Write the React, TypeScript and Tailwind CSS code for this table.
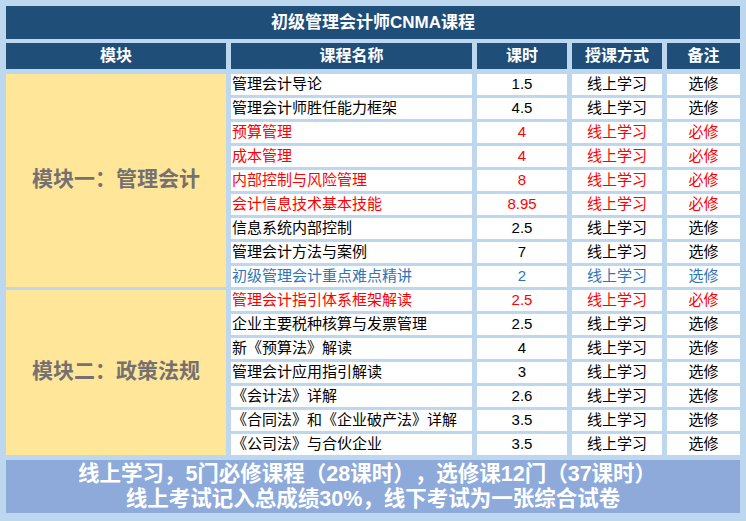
import React from 'react'

type Row = {
  name: string
  hours: string
  required: boolean
  tone: 'black' | 'red' | 'blue'
}

// 模块一
const moduleOne: Row[] = [
  { name: '管理会计导论', hours: '1.5', required: false, tone: 'black' },
  { name: '管理会计师胜任能力框架', hours: '4.5', required: false, tone: 'black' },
  { name: '预算管理', hours: '4', required: true, tone: 'red' },
  { name: '成本管理', hours: '4', required: true, tone: 'red' },
  { name: '内部控制与风险管理', hours: '8', required: true, tone: 'red' },
  { name: '会计信息技术基本技能', hours: '8.95', required: true, tone: 'red' },
  { name: '信息系统内部控制', hours: '2.5', required: false, tone: 'black' },
  { name: '管理会计方法与案例', hours: '7', required: false, tone: 'black' },
  { name: '初级管理会计重点难点精讲', hours: '2', required: false, tone: 'blue' },
]

// 模块二
const moduleTwo: Row[] = [
  { name: '管理会计指引体系框架解读', hours: '2.5', required: true, tone: 'red' },
  { name: '企业主要税种核算与发票管理', hours: '2.5', required: false, tone: 'black' },
  { name: '新《预算法》解读', hours: '4', required: false, tone: 'black' },
  { name: '管理会计应用指引解读', hours: '3', required: false, tone: 'black' },
  { name: '《会计法》详解', hours: '2.6', required: false, tone: 'black' },
  { name: '《合同法》和《企业破产法》详解', hours: '3.5', required: false, tone: 'black' },
  { name: '《公司法》与合伙企业', hours: '3.5', required: false, tone: 'black' },
]

const toneClass = {
  black: 'text-black',
  red: 'text-[#ff0000]',
  blue: 'text-[#2e75b6]',
}

const headers = ['模块', '课程名称', '课时', '授课方式', '备注']

function CourseCells({ row }: { row: Row }) {
  const c = toneClass[row.tone]
  return (
    <>
      <div className={`bg-white flex items-center pl-[1px] whitespace-nowrap ${c}`}>{row.name}</div>
      <div className={`bg-white flex items-center justify-center ${c}`}>{row.hours}</div>
      <div className={`bg-white flex items-center justify-center ${c}`}>线上学习</div>
      <div className={`bg-white flex items-center justify-center ${c}`}>
        {row.required ? '必修' : '选修'}
      </div>
    </>
  )
}

export default function App() {
  return (
    <div
      className="w-[746px] h-[521px] bg-[#bdd7ee] pt-[6px] px-[6px] flex flex-col [text-spacing-trim:space-all]"
      style={{ fontFamily: '"Liberation Sans", "Noto Sans CJK SC", sans-serif' }}
    >
      {/* 标题 */}
      <div className="h-[33px] bg-[#1f4e79] text-white font-bold text-[17px] flex items-center justify-center">
        初级管理会计师CNMA课程
      </div>

      {/* 表头 */}
      <div className="mt-[4px] h-[26px] grid grid-cols-[220px_241px_90px_90px_73px] gap-x-[5px]">
        {headers.map((h) => (
          <div key={h} className="bg-[#1f4e79] text-white font-bold text-[16px] flex items-center justify-center">
            {h}
          </div>
        ))}
      </div>

      {/* 课程列表 */}
      <div className="mt-[5px] grid grid-cols-[220px_241px_90px_90px_73px] grid-rows-[repeat(16,21px)] gap-x-[5px] gap-y-[3px] text-[15px]">
        <div className="row-span-9 bg-[#ffe699] flex items-center justify-center text-[#767171] font-bold text-[21px] pb-[4px]">
          模块一：管理会计
        </div>
        {moduleOne.map((r) => (
          <CourseCells key={r.name} row={r} />
        ))}
        <div className="row-span-7 bg-[#ffe699] flex items-center justify-center text-[#767171] font-bold text-[21px] pb-[4px]">
          模块二：政策法规
        </div>
        {moduleTwo.map((r) => (
          <CourseCells key={r.name} row={r} />
        ))}
      </div>

      {/* 底部说明 */}
      <div className="mt-[5px] h-[53px] bg-[#8eaadb] text-white font-bold text-[21.5px] leading-[25px] flex flex-col items-center justify-center">
        <div className="pr-[12px]">线上学习，5门必修课程（28课时），选修课12门（37课时）</div>
        <div>线上考试记入总成绩30%，线下考试为一张综合试卷</div>
      </div>
    </div>
  )
}
